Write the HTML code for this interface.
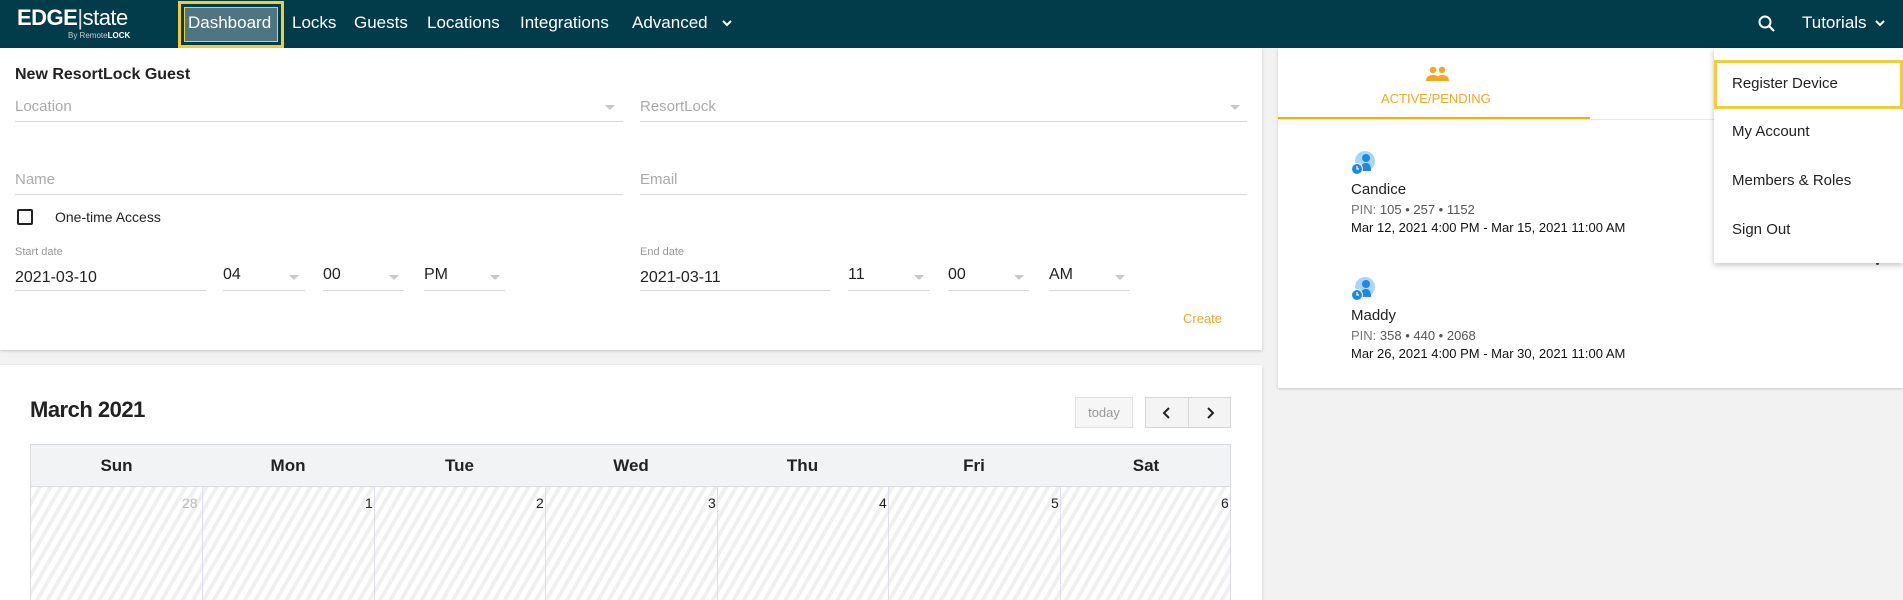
<!DOCTYPE html>
<html style="width:1903px;height:600px;overflow:hidden"><head><meta charset="utf-8"><style>
*{box-sizing:border-box;margin:0;padding:0}
body{width:1903px;height:600px;overflow:hidden;background:#f2f2f2;font-family:"Liberation Sans",sans-serif;position:relative;color:#222}
.a{position:absolute;white-space:nowrap}
.nav{position:absolute;left:0;top:0;width:1903px;height:48px;background:#023c4b}
.nl{position:absolute;top:13px;color:#fff;font-size:17px}
.card{position:absolute;background:#fff;box-shadow:0 1px 3px rgba(0,0,0,.18)}
.ul{position:absolute;height:1px;background:#d6d6d6}
.ph{color:#aaa;font-size:15px}
.car{position:absolute;width:0;height:0;border-left:5px solid transparent;border-right:5px solid transparent;border-top:5px solid #c8c8c8}
.th{position:absolute;top:0;height:42px;line-height:42px;text-align:center;font-weight:bold;font-size:17px;color:#222}
.col{position:absolute;top:42px;bottom:0;border-left:1px solid #dde;}
.dn{position:absolute;top:50px;font-size:14px;color:#222}
.mi{position:absolute;left:18px;font-size:15px;color:#222}
</style></head><body>
<div class="nav">
 <div class="a" style="left:17px;top:5px;color:#fff;font-size:22px;font-weight:bold;letter-spacing:-.5px">EDGE<span style="font-weight:normal;color:#ddd">|</span><span style="font-weight:normal">state</span></div>
 <div class="a" style="left:68px;top:31px;color:#ccc;font-size:8px">By Remote<b style="color:#fff">LOCK</b></div>
 <div class="a" style="left:178px;top:1px;width:106px;height:47px;border:3px solid #f2cd3b;"><div style="position:absolute;left:3px;top:3px;right:3px;bottom:3px;background:#4f7580;border:1px solid #f2cd3b"></div></div>
 <div class="nl" style="left:188px">Dashboard</div>
 <div class="nl" style="left:292px">Locks</div>
 <div class="nl" style="left:354px">Guests</div>
 <div class="nl" style="left:427px">Locations</div>
 <div class="nl" style="left:520px">Integrations</div>
 <div class="nl" style="left:632px">Advanced</div>
 <svg class="a" style="left:721px;top:18px" width="12" height="10"><path d="M2 3l4 4 4-4" stroke="#fff" stroke-width="2" fill="none"/></svg>
 <svg class="a" style="left:1757px;top:14px" width="20" height="20"><circle cx="8" cy="8" r="5.5" stroke="#fff" stroke-width="2" fill="none"/><path d="M12 12l5 5" stroke="#fff" stroke-width="2.2"/></svg>
 <div class="nl" style="left:1802px">Tutorials</div>
 <svg class="a" style="left:1874px;top:18px" width="12" height="10"><path d="M2 3l4 4 4-4" stroke="#fff" stroke-width="2" fill="none"/></svg>
</div>

<div class="card" style="left:0;top:48px;width:1262px;height:302px">
 <div class="a" style="left:15px;top:18px;font-size:16px;font-weight:bold">New ResortLock Guest</div>
 <div class="a ph" style="left:15px;top:50px">Location</div><div class="car" style="left:605px;top:57px"></div><div class="ul" style="left:15px;top:73px;width:608px"></div>
 <div class="a ph" style="left:640px;top:50px">ResortLock</div><div class="car" style="left:1230px;top:57px"></div><div class="ul" style="left:640px;top:73px;width:607px"></div>
 <div class="a ph" style="left:15px;top:123px">Name</div><div class="ul" style="left:15px;top:146px;width:608px"></div>
 <div class="a ph" style="left:640px;top:123px">Email</div><div class="ul" style="left:640px;top:146px;width:607px"></div>
 <div class="a" style="left:17px;top:161px;width:16px;height:16px;border:2px solid #222;border-radius:2px"></div>
 <div class="a" style="left:55px;top:161px;font-size:14px">One-time Access</div>
 <div class="a" style="left:15px;top:198px;font-size:11px;color:#999">Start date</div>
 <div class="a" style="left:15px;top:221px;font-size:16px">2021-03-10</div><div class="ul" style="left:15px;top:242px;width:191px"></div>
 <div class="a" style="left:223px;top:218px;font-size:16px">04</div><div class="car" style="left:289px;top:227px"></div><div class="ul" style="left:223px;top:242px;width:82px"></div>
 <div class="a" style="left:323px;top:218px;font-size:16px">00</div><div class="car" style="left:389px;top:227px"></div><div class="ul" style="left:323px;top:242px;width:81px"></div>
 <div class="a" style="left:424px;top:218px;font-size:16px">PM</div><div class="car" style="left:490px;top:227px"></div><div class="ul" style="left:424px;top:242px;width:81px"></div>
 <div class="a" style="left:640px;top:198px;font-size:11px;color:#999">End date</div>
 <div class="a" style="left:640px;top:221px;font-size:16px">2021-03-11</div><div class="ul" style="left:640px;top:242px;width:190px"></div>
 <div class="a" style="left:848px;top:218px;font-size:16px">11</div><div class="car" style="left:914px;top:227px"></div><div class="ul" style="left:848px;top:242px;width:82px"></div>
 <div class="a" style="left:948px;top:218px;font-size:16px">00</div><div class="car" style="left:1014px;top:227px"></div><div class="ul" style="left:948px;top:242px;width:81px"></div>
 <div class="a" style="left:1049px;top:218px;font-size:16px">AM</div><div class="car" style="left:1115px;top:227px"></div><div class="ul" style="left:1049px;top:242px;width:81px"></div>
 <div class="a" style="left:1183px;top:263px;font-size:13px;color:#f5a623">Create</div>
</div>

<div class="card" style="left:0;top:365px;width:1262px;height:235px;overflow:hidden">
 <div class="a" style="left:30px;top:32px;font-size:22px;font-weight:bold;letter-spacing:-.5px">March 2021</div>
 <div class="a" style="left:1075px;top:32px;width:58px;height:31px;border:1px solid #e0e0e0;background:#f6f6f6;color:#999;font-size:13px;text-align:center;line-height:29px">today</div>
 <div class="a" style="left:1145px;top:32px;width:86px;height:31px;border:1px solid #d6d6d6;background:#f4f4f4"><div style="position:absolute;left:42px;top:0;bottom:0;border-left:1px solid #d6d6d6"></div>
  <svg class="a" style="left:14px;top:8px" width="14" height="14"><path d="M9 2L4 7l5 5" stroke="#222" stroke-width="2" fill="none"/></svg>
  <svg class="a" style="left:57px;top:8px" width="14" height="14"><path d="M5 2l5 5-5 5" stroke="#222" stroke-width="2" fill="none"/></svg></div>
 <div class="a" style="left:30px;top:79px;width:1201px;height:156px;overflow:hidden;border:1px solid #d8dbe0;border-bottom:0;background:repeating-linear-gradient(-60deg,#fff 0 5px,#f0f0f0 5px 9px)">
  <div style="position:absolute;left:0;top:0;right:0;height:42px;background:#f2f3f5;border-bottom:1px solid #d8dbe0"></div>
  <div class="th" style="left:0;width:171px">Sun</div><div class="th" style="left:171px;width:172px">Mon</div><div class="th" style="left:343px;width:171px">Tue</div><div class="th" style="left:514px;width:172px">Wed</div><div class="th" style="left:686px;width:171px">Thu</div><div class="th" style="left:857px;width:172px">Fri</div><div class="th" style="left:1029px;width:172px">Sat</div>
  <div class="col" style="left:171px"></div><div class="col" style="left:343px"></div><div class="col" style="left:514px"></div><div class="col" style="left:686px"></div><div class="col" style="left:857px"></div><div class="col" style="left:1029px"></div>
  <div class="dn" style="left:151px;color:#bbb">28</div><div class="dn" style="left:334px">1</div><div class="dn" style="left:505px">2</div><div class="dn" style="left:677px">3</div><div class="dn" style="left:848px">4</div><div class="dn" style="left:1020px">5</div><div class="dn" style="left:1190px">6</div>
 </div>
</div>

<div class="card" style="left:1278px;top:48px;width:625px;height:340px">
 <svg class="a" style="left:148px;top:18px" width="24" height="16"><circle cx="7" cy="4" r="3.2" fill="#f5a623"/><circle cx="16" cy="4" r="3.2" fill="#f5a623"/><path d="M0 15c0-5 4-6 7-6s7 1 7 6zM10 15c1-5 3-6 6-6s7 1 7 6z" fill="#f5a623"/></svg>
 <div class="a" style="left:103px;top:43px;font-size:13px;color:#f5a623">ACTIVE/PENDING</div>
 <div class="a" style="left:0;top:69px;width:312px;height:2px;background:#f5b300"></div>
 <div class="a" style="left:0;top:71px;width:625px;height:1px;background:#e8e8e8"></div>
 <svg class="a" style="left:73px;top:102px" width="26" height="26"><circle cx="14" cy="11" r="10" fill="#a9d6f8"/><circle cx="15" cy="8" r="4" fill="#1e88e5"/><path d="M9 21c0-6 3-8 6-8s5 2 5 8z" fill="#1e88e5"/><circle cx="6" cy="19" r="5.5" fill="#1e88e5" stroke="#fff" stroke-width="1"/><path d="M6 16v3h2" stroke="#fff" stroke-width="1.2" fill="none"/></svg>
 <div class="a" style="left:73px;top:133px;font-size:15px">Candice</div>
 <div class="a" style="left:73px;top:154px;font-size:13px;color:#777">PIN: <span style="color:#555">105 • 257 • 1152</span></div>
 <div class="a" style="left:73px;top:172px;font-size:13px;color:#111">Mar 12, 2021 4:00 PM - Mar 15, 2021 11:00 AM</div>
 <svg class="a" style="left:73px;top:228px" width="26" height="26"><circle cx="14" cy="11" r="10" fill="#a9d6f8"/><circle cx="15" cy="8" r="4" fill="#1e88e5"/><path d="M9 21c0-6 3-8 6-8s5 2 5 8z" fill="#1e88e5"/><circle cx="6" cy="19" r="5.5" fill="#1e88e5" stroke="#fff" stroke-width="1"/><path d="M6 16v3h2" stroke="#fff" stroke-width="1.2" fill="none"/></svg>
 <div class="a" style="left:73px;top:259px;font-size:15px">Maddy</div>
 <div class="a" style="left:73px;top:280px;font-size:13px;color:#777">PIN: <span style="color:#555">358 • 440 • 2068</span></div>
 <div class="a" style="left:73px;top:298px;font-size:13px;color:#111">Mar 26, 2021 4:00 PM - Mar 30, 2021 11:00 AM</div>
 <div class="a" style="left:598px;top:214px;width:3px;height:3px;border-radius:50%;background:#444"></div>
</div>

<div class="card" style="left:1714px;top:48px;width:189px;height:215px;box-shadow:0 2px 6px rgba(0,0,0,.25)">
 <div class="a" style="left:0;top:12px;width:189px;height:49px;border:3px solid #f2cd3b"></div>
 <div class="mi" style="top:27px">Register Device</div>
 <div class="mi" style="top:75px">My Account</div>
 <div class="mi" style="top:124px">Members &amp; Roles</div>
 <div class="mi" style="top:173px">Sign Out</div>
</div>
</body></html>
